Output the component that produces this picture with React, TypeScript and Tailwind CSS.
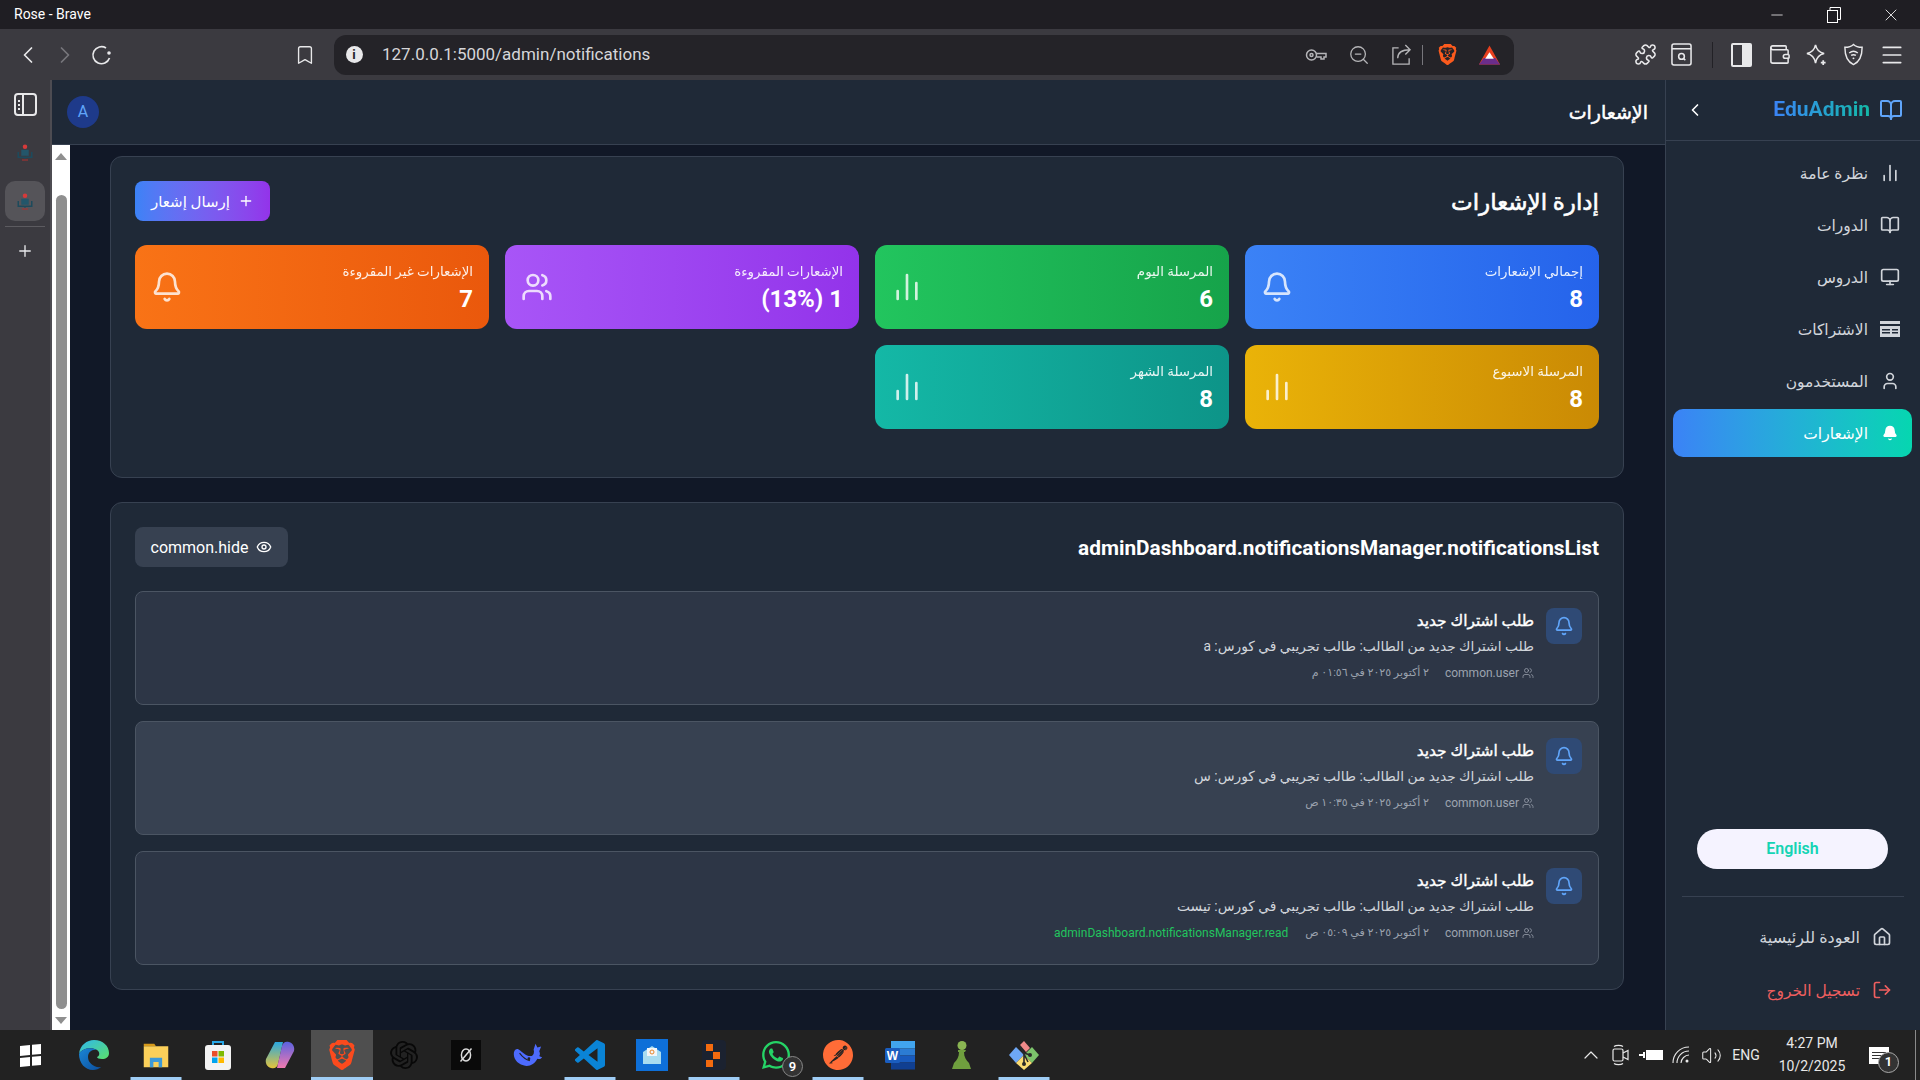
import React from "react";
import { Bell, BookOpen, ChartNoAxesColumn, ChevronLeft, Eye, House, LogOut, Monitor, Plus, User, Users, ChevronRight, Bookmark, Puzzle, Wallet, Menu, Minus, X, ChevronUp, Volume2, ZoomOut } from "lucide-react";
import { SiBrave, SiOpenai, SiPostman } from "react-icons/si";
import { FaWhatsapp } from "react-icons/fa";

const Slot = ({ w, className = "", children }: { w: string; className?: string; children?: React.ReactNode }) => (
  <div className={`flex items-center justify-center shrink-0 ${w} ${className}`}>{children}</div>
);

const stats = [
  { label: "إجمالي الإشعارات", value: "8", icon: "bell", cls: "from-[#3b82f6] to-[#2563eb]" },
  { label: "المرسلة اليوم", value: "6", icon: "chart", cls: "from-[#22c55e] to-[#16a34a]" },
  { label: "الإشعارات المقروءة", value: "1 (13%)", icon: "users", cls: "from-[#a855f7] to-[#9333ea]" },
  { label: "الإشعارات غير المقروءة", value: "7", icon: "bell", cls: "from-[#f97316] to-[#ea580c]" },
  { label: "المرسلة الاسبوع", value: "8", icon: "chart", cls: "from-[#eab308] to-[#ca8a04]" },
  { label: "المرسلة الشهر", value: "8", icon: "chart", cls: "from-[#14b8a6] to-[#0d9488]" },
];

const notes = [
  { body: "طلب اشتراك جديد من الطالب: طالب تجريبي في كورس: a", date: "٢ أكتوبر ٢٠٢٥ في ٠١:٥٦ م", bg: "bg-[#2d3646]", read: false },
  { body: "طلب اشتراك جديد من الطالب: طالب تجريبي في كورس: س", date: "٢ أكتوبر ٢٠٢٥ في ١٠:٣٥ ص", bg: "bg-[#374151]", read: false },
  { body: "طلب اشتراك جديد من الطالب: طالب تجريبي في كورس: تيست", date: "٢ أكتوبر ٢٠٢٥ في ٠٥:٠٩ ص", bg: "bg-[#2d3646]", read: true },
];

const CardIcon = () => (
  <svg viewBox="0 0 20 20" className="w-5 h-5" fill="#d1d5db">
    <path fillRule="evenodd" d="M0 2h20v16H0zM0 5v2h20V5zM2 10v1.5h8V10zM12 10v1.5h6V10zM2 13v1.5h8V13zM12 13v1.5h6V13z" />
  </svg>
);

const nav: { label: string; icon: React.ReactNode; active?: boolean }[] = [
  { label: "نظرة عامة", icon: <ChartNoAxesColumn className="w-5 h-5" strokeWidth={2} /> },
  { label: "الدورات", icon: <BookOpen className="w-5 h-5" strokeWidth={2} /> },
  { label: "الدروس", icon: <Monitor className="w-5 h-5" strokeWidth={2} /> },
  { label: "الاشتراكات", icon: <CardIcon /> },
  { label: "المستخدمون", icon: <User className="w-5 h-5" strokeWidth={2} /> },
  { label: "الإشعارات", icon: <Bell className="w-4 h-4 mx-[2px]" fill="currentColor" strokeWidth={2} />, active: true },
];

const Favicon = () => (
  <svg viewBox="0 0 24 24" className="w-[18px] h-[18px]">
    <circle cx="12" cy="5" r="3" fill="#d63a3a" />
    <path d="M3 12v7h8l1 1 1-1h8v-7" fill="none" stroke="#1d4a5c" strokeWidth="2" />
    <path d="M7 9h10v8H7z" fill="#23566a" />
    <rect x="8" y="22" width="8" height="1.4" fill="#a83232" />
  </svg>
);

const Edge = () => (
  <svg viewBox="0 0 32 32" className="w-8 h-8">
    <defs>
      <linearGradient id="eg" x1="0" y1="0" x2="1" y2="1"><stop offset="0" stopColor="#2fb7ee" /><stop offset="1" stopColor="#5be06a" /></linearGradient>
      <linearGradient id="eb" x1="0" y1="0" x2="1" y2="1"><stop offset="0" stopColor="#1a86d6" /><stop offset="1" stopColor="#0c4f9e" /></linearGradient>
    </defs>
    <path d="M1 15C2 6 9 1 16 1c9 0 15 6 15 13 0 4-3 6-7 6-3 0-5-1-5-2 3-1 3-5 0-7C14 8 4 9 1 15z" fill="url(#eg)" />
    <path d="M1 15c3-6 13-7 18-4-5-1-9 2-9 7 0 6 6 11 13 10-2 2-5 3-8 3C7 31 1 24 1 15z" fill="url(#eb)" />
  </svg>
);

const Explorer = () => (
  <svg viewBox="0 0 32 32" className="w-7 h-8">
    <path d="M2 3h12l2 3H2z" fill="#d69a1b" />
    <rect x="2" y="6" width="28" height="24" fill="#fbd05a" />
    <path d="M9 30V19h14v11h-4v-6h-6v6z" fill="#3d9ad8" />
  </svg>
);

const Store = () => (
  <svg viewBox="0 0 32 32" className="w-8 h-8">
    <path d="M11 7V3h10v4" fill="none" stroke="#27a6e5" strokeWidth="2" />
    <rect x="3" y="6" width="26" height="25" rx="3" fill="#f3f3f3" />
    <rect x="10" y="12" width="5.500" height="5.500" fill="#ea4f2b" />
    <rect x="16.500" y="12" width="5.500" height="5.500" fill="#7fba00" />
    <rect x="10" y="18.500" width="5.500" height="5.500" fill="#00a4ef" />
    <rect x="16.500" y="18.500" width="5.500" height="5.500" fill="#ffb900" />
  </svg>
);

const Copilot = () => (
  <svg viewBox="0 0 32 32" className="w-8 h-8">
    <defs>
      <linearGradient id="cp1" x1="0" y1="0" x2="0" y2="1"><stop offset="0" stopColor="#2aa7e0" /><stop offset="1" stopColor="#e6c43a" /></linearGradient>
      <linearGradient id="cp2" x1="0" y1="0" x2="0" y2="1"><stop offset="0" stopColor="#5a62e0" /><stop offset="1" stopColor="#f07ab0" /></linearGradient>
    </defs>
    <path d="M11 3h8l-5 22c-1 4-4 5-7 4-4-1-6-5-5-9z" fill="url(#cp1)" />
    <path d="M21 29h-8l5-22c1-4 4-5 7-4 4 1 6 5 5 9z" fill="url(#cp2)" />
  </svg>
);

const Cursor = () => (
  <div className="w-[30px] h-[30px] bg-[#0a0a0a] flex items-center justify-center">
    <svg viewBox="0 0 24 24" className="w-[22px] h-[22px]" fill="none" stroke="#ddd" strokeWidth="1.6"><ellipse cx="12" cy="12" rx="5" ry="6.500" /><path d="M6 19 18 5" /></svg>
  </div>
);

const Deepseek = () => (
  <svg viewBox="0 0 32 32" className="w-[30px] h-[30px]">
    <path d="M1 13c1-3 3-4 5-3 5 3 8 8 14 7 2-1 3-4 2-7l2-6 2 4 4-1-2 5c1 2 1 4 0 5 1 1 2 1 3 1-1 2-3 3-5 2-3 6-9 9-15 7C4 25 0 19 1 13z" fill="#4d6bfe" />
    <circle cx="17" cy="20" r="1.500" fill="#222" />
    <path d="M7 14c3 4 6 7 11 8" stroke="#222" strokeWidth="1.200" fill="none" />
  </svg>
);

const VSCode = () => (
  <svg viewBox="0 0 24 24" className="w-[30px] h-[30px]" fill="#0a84d6">
    <path d="M23.15 2.587L18.21.21a1.494 1.494 0 0 0-1.705.29l-9.46 8.63-4.12-3.128a.999.999 0 0 0-1.276.057L.327 7.261A1 1 0 0 0 .326 8.74L3.899 12 .326 15.26a1 1 0 0 0 .001 1.479L1.65 17.94a.999.999 0 0 0 1.276.057l4.12-3.128 9.46 8.63a1.492 1.492 0 0 0 1.704.29l4.942-2.377A1.5 1.5 0 0 0 24 20.06V3.939a1.5 1.5 0 0 0-.85-1.352zm-5.146 14.861L10.826 12l7.178-5.448v10.896z" />
  </svg>
);

const MailApp = () => (
  <div className="w-[32px] h-[32px] bg-[#0e6fd8] flex items-center justify-center">
    <svg viewBox="0 0 24 24" className="w-[24px] h-[24px]"><path d="M3 9 12 3l9 6v12H3z" fill="#a8dcf0" /><rect x="7" y="5" width="10" height="8" fill="#f2f6f8" /><circle cx="12" cy="9" r="2" fill="none" stroke="#e8852a" strokeWidth="1" /></svg>
  </div>
);

const OrangeSquares = () => (
  <div className="w-[24px] h-[30px] bg-[#1b2230] rounded-sm flex flex-col justify-center gap-[1px] pl-[4px]">
    <div className="w-[7px] h-[7px] bg-[#f26a0f]" />
    <div className="w-[7px] h-[7px] bg-[#f26a0f] ml-[7px]" />
    <div className="w-[7px] h-[7px] bg-[#f26a0f]" />
  </div>
);

const Word = () => (
  <svg viewBox="0 0 32 32" className="w-8 h-8">
    <rect x="7" y="2" width="24" height="7.500" fill="#41a5ee" />
    <rect x="7" y="9.500" width="24" height="7" fill="#2b7cd3" />
    <rect x="7" y="16.500" width="24" height="7" fill="#185abd" />
    <rect x="7" y="23.500" width="24" height="7" fill="#103f91" />
    <rect x="1" y="9" width="15" height="15" rx="1.500" fill="#1a5dbf" />
    <text x="8.500" y="21" textAnchor="middle" fontSize="12" fontWeight="700" fill="#fff" fontFamily="Liberation Sans">W</text>
  </svg>
);

const Pawn = () => (
  <svg viewBox="0 0 24 32" className="w-[24px] h-[32px]">
    <circle cx="12" cy="6.500" r="4.500" fill="#8ab552" />
    <path d="M8 11h8l-1 2h-1c0 5 2 8 5 11l2 6H2l2-6c3-3 5-6 5-11H8z" fill="#6f9f3e" />
  </svg>
);

const Git = () => (
  <svg viewBox="0 0 32 32" className="w-8 h-8">
    <path d="M16 16 8 8l-7 8 7 8z" fill="#6ea7f5" />
    <path d="M16 16l8-8 7 8-7 8z" fill="#7cc46b" />
    <path d="M16 16l-8 8 8 7 8-7z" fill="#fbdc72" />
    <path d="M12 6l4-4 6 7-4 4z" fill="#f08a8a" />
    <path d="M12 7l8 16M16 14v12M16 14l6 2" stroke="#2a2a2a" strokeWidth="1.600" />
    <circle cx="16" cy="25" r="2" fill="#2a2a2a" /><circle cx="22" cy="16" r="2" fill="#2a2a2a" />
  </svg>
);

const Tray = ({ w, children }: { w: string; children: React.ReactNode }) => <Slot w={w} className="h-full text-[#e8e8e8]">{children}</Slot>;

const task: { el: React.ReactNode; bar?: string; bg?: string }[] = [
  { el: <Edge /> },
  { el: <Explorer />, bar: "w-[51px]" },
  { el: <Store /> },
  { el: <Copilot /> },
  { el: <SiBrave className="w-[30px] h-[32px] text-[#fb4a1d]" />, bar: "w-full", bg: "bg-[#4f4f4f]" },
  { el: <SiOpenai className="w-[28px] h-[28px] text-[#080808]" /> },
  { el: <Cursor /> },
  { el: <Deepseek /> },
  { el: <VSCode />, bar: "w-[51px]" },
  { el: <MailApp /> },
  { el: <OrangeSquares />, bar: "w-[51px]" },
  {
    el: (
      <div className="relative">
        <FaWhatsapp className="w-[32px] h-[32px] text-[#25d366]" />
        <span className="absolute -right-[11px] -bottom-[6px] w-[21px] h-[21px] rounded-full border border-[#888] bg-[#333] text-white text-[13px] font-semibold flex items-center justify-center">9</span>
      </div>
    ),
  },
  { el: <SiPostman className="w-[30px] h-[32px] text-[#ff6c37]" />, bar: "w-[51px]" },
  { el: <Word /> },
  { el: <Pawn /> },
  { el: <Git />, bar: "w-[51px]" },
];

export default function App() {
  return (
    <div dir="ltr" className="w-[1920px] h-[1080px] overflow-hidden flex flex-col bg-[#111827] font-['Roboto','DejaVu_Sans',sans-serif]">
      {/* window title */}
      <div className="h-[29px] bg-[#1f1e23] flex items-center text-white">
        <span className="ml-[14px] text-[14px]">Rose - Brave</span>
        <Slot w="w-[30px]" className="ml-auto mr-[27px]"><Minus className="w-[18px] h-[18px]" strokeWidth={1} /></Slot>
        <Slot w="w-[30px]" className="mr-[27px]">
          <svg viewBox="0 0 14 16" className="w-[14px] h-[16px]" fill="none" stroke="currentColor" strokeWidth="1"><rect x="0.500" y="3.500" width="10" height="12" /><path d="M3 3V0.500h10.500v12H11" /></svg>
        </Slot>
        <Slot w="w-[30px]" className="mr-[14px]"><X className="w-[20px] h-[20px]" strokeWidth={1} /></Slot>
      </div>
      {/* toolbar */}
      <div className="h-[51px] bg-[#3b3a40] flex items-center text-[#e8e8ea]">
        <Slot w="w-[37px]" className="ml-[9px]"><ChevronLeft className="w-[28px] h-[28px]" strokeWidth={1.5} /></Slot>
        <Slot w="w-[37px]"><ChevronRight className="w-[28px] h-[28px] text-[#77767c]" strokeWidth={1.5} /></Slot>
        <Slot w="w-[37px]">
          <svg viewBox="0 0 22 22" className="w-[22px] h-[22px]" fill="none" stroke="currentColor" strokeWidth="1.700"><path d="M18.500 14A8.500 8.500 0 1 1 15 4" /><circle cx="18" cy="9" r="1.800" fill="currentColor" stroke="none" /></svg>
        </Slot>
        <Slot w="w-[30px]" className="ml-[170px]"><Bookmark className="w-[22px] h-[24px]" strokeWidth={1.5} /></Slot>
        <div className="ml-[14px] w-[1180px] h-[40px] rounded-[12px] bg-[#242328] flex items-center pr-[11px]">
          <Slot w="w-[24px]" className="ml-[8px]">
            <span className="w-[17px] h-[17px] rounded-full bg-[#e8e8ea] text-[#242328] text-[13px] font-bold flex items-center justify-center">i</span>
          </Slot>
          <span className="ml-[16px] text-[17px] text-[#d6d6d9]">127.0.0.1:5000/admin/notifications</span>
          <Slot w="w-[28px]" className="ml-auto">
            <svg viewBox="0 0 22 14" className="w-[22px] h-[14px] text-[#b5b5b8]" fill="none" stroke="currentColor" strokeWidth="1.500"><circle cx="6.500" cy="7" r="5" /><circle cx="6.500" cy="7" r="1.500" /><path d="M11.500 5.500H21V9h-2v2h-3V9h-4.500" /></svg>
          </Slot>
          <Slot w="w-[28px]" className="ml-[15px]"><ZoomOut className="w-[22px] h-[22px] text-[#b5b5b8]" strokeWidth={1.4} /></Slot>
          <Slot w="w-[28px]" className="ml-[14px]">
            <svg viewBox="0 0 22 22" className="w-[21px] h-[21px] text-[#b5b5b8]" fill="none" stroke="currentColor" strokeWidth="1.400"><path d="M8 4H2v17h17v-6" /><path d="M7 15c0-6 4-9 13-9M15 1l5 5-5 5" /></svg>
          </Slot>
          <div className="ml-[7px] w-[1px] h-[20px] bg-[#77767c]" />
          <Slot w="w-[28px]" className="ml-[10px]"><SiBrave className="w-[21px] h-[25px] text-[#fb5a1d]" /></Slot>
          <Slot w="w-[28px]" className="ml-[14px]">
            <svg viewBox="0 0 24 22" className="w-[23px] h-[22px]">
              <path d="M12 1 1 21h22z" fill="#e8401f" />
              <path d="M1 21l5-7h12l5 7z" fill="#6b2d8b" />
              <path d="M12 8l-4.500 7h9z" fill="#fff" />
            </svg>
          </Slot>
        </div>
        <Slot w="w-[36px]" className="ml-[113px]"><Puzzle className="w-[23px] h-[23px]" strokeWidth={1.6} /></Slot>
        <Slot w="w-[36px]">
          <svg viewBox="0 0 22 24" className="w-[21px] h-[25px]" fill="none" stroke="currentColor" strokeWidth="1.600"><rect x="1" y="1" width="20" height="22" rx="2" /><path d="M1 6h20" /><circle cx="11" cy="14" r="3" /><path d="m13 16 2 2" /></svg>
        </Slot>
        <div className="ml-[13px] w-[1px] h-[26px] bg-[#222126]" />
        <Slot w="w-[36px]" className="ml-[10px]">
          <div className="w-[21px] h-[24px] border-2 border-[#e8e8ea] rounded-[2px] flex justify-end"><div className="w-[8px] h-full bg-[#e8e8ea]" /></div>
        </Slot>
        <Slot w="w-[36px]" className="ml-[2px]"><Wallet className="w-[23px] h-[23px]" strokeWidth={1.6} /></Slot>
        <Slot w="w-[36px]" className="ml-[1px]">
          <svg viewBox="0 0 24 24" className="w-[23px] h-[23px]" fill="none" stroke="currentColor" strokeWidth="1.600"><path d="M11 2c1 5 4 8 9 9-5 1-8 4-9 10-1-6-4-9-9-10 5-1 8-4 9-9z" /><path d="M19 18v5M16.500 20.500h5" strokeWidth="1.800" /></svg>
        </Slot>
        <Slot w="w-[36px]" className="ml-[1px]">
          <svg viewBox="0 0 24 24" className="w-[23px] h-[25px]" fill="none" stroke="currentColor" strokeWidth="1.500"><path d="M12 1.500c2 2 5 3 9 3 0 9-2 15-9 18-7-3-9-9-9-18 4 0 7-1 9-3z" /><path d="M7.500 10.500c3-2.500 6-2.500 9 0M9.500 13c1.500-1 3.500-1 5 0" /><circle cx="12" cy="16" r="1" fill="currentColor" stroke="none" /></svg>
        </Slot>
        <Slot w="w-[36px]" className="ml-[3px]"><Menu className="w-[26px] h-[26px]" strokeWidth={1.6} /></Slot>
      </div>
      {/* body */}
      <div className="h-[950px] flex">
        <div className="w-[52px] shrink-0 bg-[#3b3a40] border-r-2 border-[#4d4c52] flex flex-col items-center pt-[13px]">
          <div className="w-[23px] h-[23px] rounded-[4px] border-2 border-[#e8e8ea] flex">
            <div className="w-[8px] border-r-2 border-[#e8e8ea] flex flex-col items-center justify-center gap-[2px]">
              <span className="w-[2px] h-[2px] bg-[#e8e8ea]" /><span className="w-[2px] h-[2px] bg-[#e8e8ea]" /><span className="w-[2px] h-[2px] bg-[#e8e8ea]" />
            </div>
          </div>
          <div className="mt-[27px]"><Favicon /></div>
          <div className="mt-[20px] w-[40px] h-[40px] rounded-[10px] bg-[#555459] flex items-center justify-center"><Favicon /></div>
          <div className="mt-[5px] w-[40px] h-[1px] bg-[#5c5b60]" />
          <Plus className="mt-[15px] w-[18px] h-[18px] text-[#e8e8ea]" strokeWidth={1.8} />
        </div>
        <div dir="rtl" className="flex-1 flex min-w-0 text-white">
          {/* sidebar */}
          <aside className="w-[255px] shrink-0 bg-[#1f2937] border-l border-[#374151] flex flex-col">
            <div className="h-[61px] border-b border-[#374151] shrink-0 flex items-center pr-[17px] pl-[19px]">
              <BookOpen className="w-6 h-6 text-[#60a5fa]" strokeWidth={2} />
              <span dir="ltr" className="mr-[9px] text-[21px] font-bold bg-linear-to-r from-[#3b82f6] to-[#14b8a6] bg-clip-text text-transparent">EduAdmin</span>
              <ChevronLeft className="mr-auto w-5 h-5 text-white" strokeWidth={2} />
            </div>
            <nav className="pt-2 pr-2 pl-[7px] flex flex-col gap-1">
              {nav.map((n) => (
                <div key={n.label} className={`h-[48px] rounded-[10px] flex items-center gap-3 pr-3 ${n.active ? "bg-linear-to-r from-[#3b82f6] to-[#06d6b0] text-white" : "text-[#d1d5db]"}`}>
                  {n.icon}
                  <span className="text-[15.5px] mt-[4px]">{n.label}</span>
                </div>
              ))}
            </nav>
            <div className="mt-auto px-4 pb-4">
              <div className="ml-[15px] mr-[16px] mb-[27px] h-[40px] rounded-full bg-[#f5f3ff] flex items-center justify-center text-[16px] font-semibold text-[#14d4b4]">English</div>
              <div className="border-t border-[#374151] pt-4 flex flex-col gap-[5px]">
                <div className="h-[48px] flex items-center gap-3 pr-3 text-[#d1d5db]">
                  <House className="w-5 h-5" strokeWidth={2} />
                  <span className="text-[16px] mt-[2px]">العودة للرئيسية</span>
                </div>
                <div className="h-[48px] flex items-center gap-3 pr-3 text-[#ef5f5f]">
                  <LogOut className="w-5 h-5" strokeWidth={2} />
                  <span className="text-[15.5px] mt-[3px]">تسجيل الخروج</span>
                </div>
              </div>
            </div>
          </aside>
          {/* main */}
          <div className="flex-1 min-w-0 flex flex-col">
            <header className="h-[65px] shrink-0 bg-[#1f2937] border-b border-[#374151] flex items-center justify-between pr-[17px] pl-[15px]">
              <h1 className="text-[19px] mt-[2px] font-normal [-webkit-text-stroke:0.5px_currentColor] text-white">الإشعارات</h1>
              <div className="w-8 h-8 rounded-full bg-[#1e3a8a] text-[#60a5fa] text-[16px] flex items-center justify-center">A</div>
            </header>
            <div className="flex-1 flex min-h-0">
              <main className="flex-1 min-w-0 bg-[#111827] pt-[11px] pr-[41px] pl-[40px] overflow-hidden">
                <section className="h-[322px] rounded-xl border border-[#374151] bg-[#1f2937] p-6">
                  <div className="flex items-center justify-between h-[40px] mb-6">
                    <h2 className="text-[23px] mt-[4px] font-normal [-webkit-text-stroke:0.6px_currentColor] text-white">إدارة الإشعارات</h2>
                    <button className="w-[135px] h-[40px] rounded-lg bg-linear-to-r from-[#3b82f6] to-[#9333ea] text-white text-[15px] flex items-center justify-center gap-2">
                      <Plus className="w-4 h-4" strokeWidth={2} />
                      <span className="mt-[2px]">إرسال إشعار</span>
                    </button>
                  </div>
                  <div className="grid grid-cols-4 gap-4">
                    {stats.map((s) => (
                      <div key={s.label} className={`h-[84px] rounded-xl bg-linear-to-r ${s.cls} flex items-center justify-between px-4 text-white`}>
                        <div>
                          <div className="text-[13.4px] leading-[20px] opacity-90 mt-[2px]">{s.label}</div>
                          <div className="text-[24px] leading-[32px] font-bold mt-[1px]">{s.value}</div>
                        </div>
                        {s.icon === "bell" && <Bell className="w-8 h-8 opacity-80" strokeWidth={2} />}
                        {s.icon === "chart" && <ChartNoAxesColumn className="w-8 h-8 opacity-80" strokeWidth={2} />}
                        {s.icon === "users" && <Users className="w-8 h-8 opacity-80" strokeWidth={2} />}
                      </div>
                    ))}
                  </div>
                </section>
                <section className="mt-6 h-[488px] rounded-xl border border-[#374151] bg-[#1f2937] p-6">
                  <div className="flex items-center justify-between h-[40px] mb-6">
                    <h2 dir="ltr" className="text-[20.8px] mt-[4px] font-bold text-white">adminDashboard.notificationsManager.notificationsList</h2>
                    <button className="h-[40px] w-[153px] rounded-lg bg-[#374151] text-white text-[16px] flex items-center justify-center gap-2">
                      <Eye className="w-4 h-4" strokeWidth={2} />
                      <span className="mt-[1px]">common.hide</span>
                    </button>
                  </div>
                  <div className="flex flex-col gap-4">
                    {notes.map((n, i) => (
                      <div key={i} className={`h-[114px] rounded-lg border border-[#4b5563] ${n.bg} p-4 flex gap-3 items-start`}>
                        <div className="w-9 h-9 rounded-lg bg-[#2f4a75] flex items-center justify-center shrink-0">
                          <Bell className="w-5 h-5 text-[#60a5fa]" strokeWidth={2} />
                        </div>
                        <div>
                          <div className="text-[15.4px] leading-[24px] mt-[1px] font-normal [-webkit-text-stroke:0.4px_currentColor] text-white">طلب اشتراك جديد</div>
                          <div className="text-[13.8px] leading-[20px] mt-[3px] text-[#d1d5db]">{n.body}</div>
                          <div className="mt-[9px] flex items-center text-[12px] leading-[16px] text-[#9ca3af]">
                            <Users className="w-3 h-3 ml-[3px]" strokeWidth={1.5} />
                            <span>common.user</span>
                            <span className="mr-[16px] text-[11px]">{n.date}</span>
                            {n.read && <span className="mr-[17px] text-[#22c55e]">adminDashboard.notificationsManager.read</span>}
                          </div>
                        </div>
                      </div>
                    ))}
                  </div>
                </section>
              </main>
              {/* scrollbar */}
              <div className="w-[18px] shrink-0 bg-white flex flex-col items-center pt-[8px] pb-[6px]">
                <div className="w-0 h-0 border-x-[6px] border-x-transparent border-b-[7px] border-b-[#8f8f8f]" />
                <div className="mt-[35px] w-[11px] flex-1 rounded-full bg-[#8f8f8f]" />
                <div className="mt-[8px] w-0 h-0 border-x-[6px] border-x-transparent border-t-[7px] border-t-[#8f8f8f]" />
              </div>
            </div>
          </div>
        </div>
      </div>
      {/* taskbar */}
      <div className="h-[50px] bg-[#222222] flex items-stretch">
        <Slot w="w-[60px]">
          <div className="grid grid-cols-2 gap-[2px] w-[21px] h-[21px] -skew-y-6">
            <span className="bg-white" /><span className="bg-white" /><span className="bg-white" /><span className="bg-white" />
          </div>
        </Slot>
        <div className="ml-[3px] flex">
          {task.map((t, i) => (
            <div key={i} className={`relative w-[62px] flex items-center justify-center ${t.bg ?? ""}`}>
              {t.el}
              {t.bar && <span className={`absolute bottom-0 left-1/2 -translate-x-1/2 h-[3px] bg-[#9fcdf5] ${t.bar}`} />}
            </div>
          ))}
        </div>
        <div className="ml-auto flex items-stretch text-[#e8e8e8]">
          <Tray w="w-[30px]"><ChevronUp className="w-[24px] h-[24px]" strokeWidth={1.2} /></Tray>
          <Tray w="w-[30px]">
            <svg viewBox="0 0 18 22" className="w-[18px] h-[22px]" fill="none" stroke="currentColor" strokeWidth="1.200"><rect x="1" y="5" width="10" height="12" rx="1.500" /><path d="m11 9 5-2.500v9L11 13M2 2.500c2-1.500 7-1.500 9 0M2 19.500c2 1.500 7 1.500 9 0" /></svg>
          </Tray>
          <Tray w="w-[30px]">
            <div className="flex items-center"><span className="w-[4px] h-[2px] bg-white" /><div className="w-[2px] h-[6px] bg-white" /><div className="ml-[1px] w-[17px] h-[10px] border border-white bg-white" /></div>
          </Tray>
          <Tray w="w-[30px]">
            <svg viewBox="0 0 18 18" className="w-[18px] h-[18px]" fill="none" stroke="currentColor" strokeWidth="1.100"><path d="M1 17C1 8 8 1 17 1M5 17c0-6.500 5-12 12-12M9 17c0-4 4-8 8-8" /><circle cx="15" cy="15" r="1.500" fill="currentColor" stroke="none" /></svg>
          </Tray>
          <Tray w="w-[30px]"><Volume2 className="w-[21px] h-[21px]" strokeWidth={1.2} /></Tray>
          <div className="w-[40px] flex items-center justify-center"><span className="text-[14px]">ENG</span></div>
          <div className="ml-[4px] w-[84px] flex flex-col items-center justify-center text-[14px] leading-[23px] text-[#e8e8e8]">
            <span>4:27 PM</span>
            <span>10/2/2025</span>
          </div>
          <div className="ml-[4px] w-[42px] flex items-center justify-center">
            <div className="relative w-[20px] h-[17px] bg-white flex flex-col justify-center gap-[2px] px-[3px]">
              <span className="h-[1px] bg-[#333]" /><span className="h-[1px] bg-[#333]" /><span className="h-[1px] bg-[#333]" />
              <span className="absolute -right-[10px] -bottom-[9px] w-[21px] h-[21px] rounded-full border border-[#aaa] bg-[#333] text-white text-[13px] font-semibold flex items-center justify-center">1</span>
            </div>
          </div>
          <div className="ml-[15px] mr-[4px] w-[1px] bg-[#8a8a8a]" />
        </div>
      </div>
    </div>
  );
}
